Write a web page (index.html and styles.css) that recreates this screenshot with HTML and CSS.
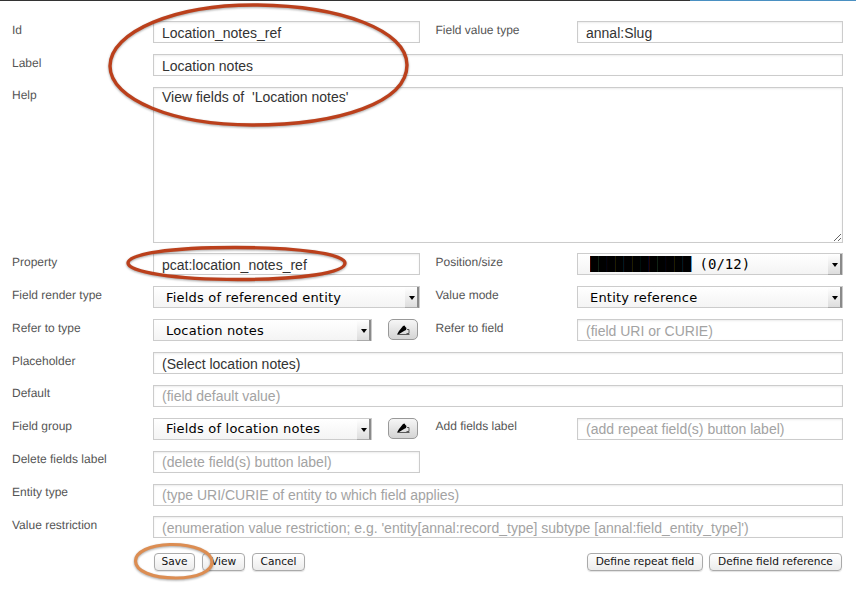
FILE: index.html
```html
<!DOCTYPE html>
<html lang="en">
<head>
<meta charset="utf-8">
<title>Field definition</title>
<link rel="stylesheet" href="styles.css">
</head>
<body>
<div class="topbar"><div class="topbar-dark"></div><div class="topbar-blue"></div></div>
<form class="form">
  <div class="row">
    <label class="label">Id</label>
    <input class="field half first" value="Location_notes_ref">
    <label class="label second">Field value type</label>
    <input class="field half" value="annal:Slug">
  </div>
  <div class="row">
    <label class="label">Label</label>
    <input class="field full" value="Location notes">
  </div>
  <div class="row tall">
    <label class="label">Help</label>
    <textarea class="field full area">View fields of  'Location notes'</textarea>
  </div>
  <div class="row">
    <label class="label">Property</label>
    <input class="field half first" value="pcat:location_notes_ref">
    <label class="label second">Position/size</label>
    <div class="select half"><select class="mono"><option>████████████ (0/12)</option></select></div>
  </div>
  <div class="row">
    <label class="label">Field render type</label>
    <div class="select half first"><select><option>Fields of referenced entity</option></select></div>
    <label class="label second">Value mode</label>
    <div class="select half"><select><option>Entity reference</option></select></div>
  </div>
  <div class="row">
    <label class="label">Refer to type</label>
    <div class="select short"><select><option>Location notes</option></select></div>
    <button type="button" class="pen" aria-label="Edit"><svg class="pen-icon" width="13" height="10" viewBox="0 0 13 10"><path d="M0 9.500L2 6L6 1L7.500 .5L8.500 2L9.500 3L9 5L7 6L4.500 7.500L2.500 8.800Z"/><path d="M.5 9.500H12.500M10 4.500H12V8.500H9.500" fill="none" stroke="#222" stroke-width=".7"/></svg></button>
    <label class="label second">Refer to field</label>
    <input class="field half" placeholder="(field URI or CURIE)">
  </div>
  <div class="row">
    <label class="label">Placeholder</label>
    <input class="field full" value="(Select location notes)">
  </div>
  <div class="row">
    <label class="label">Default</label>
    <input class="field full" placeholder="(field default value)">
  </div>
  <div class="row">
    <label class="label">Field group</label>
    <div class="select short"><select><option>Fields of location notes</option></select></div>
    <button type="button" class="pen" aria-label="Edit"><svg class="pen-icon" width="13" height="10" viewBox="0 0 13 10"><path d="M0 9.500L2 6L6 1L7.500 .5L8.500 2L9.500 3L9 5L7 6L4.500 7.500L2.500 8.800Z"/><path d="M.5 9.500H12.500M10 4.500H12V8.500H9.500" fill="none" stroke="#222" stroke-width=".7"/></svg></button>
    <label class="label second">Add fields label</label>
    <input class="field half" placeholder="(add repeat field(s) button label)">
  </div>
  <div class="row">
    <label class="label">Delete fields label</label>
    <input class="field half first" placeholder="(delete field(s) button label)">
  </div>
  <div class="row">
    <label class="label">Entity type</label>
    <input class="field full" placeholder="(type URI/CURIE of entity to which field applies)">
  </div>
  <div class="row">
    <label class="label">Value restriction</label>
    <input class="field full" placeholder="(enumeration value restriction; e.g. 'entity[annal:record_type] subtype [annal:field_entity_type]')">
  </div>
  <div class="actions">
    <div class="actions-left">
      <button type="button" class="btn save">Save</button>
      <button type="button" class="btn view">View</button>
      <button type="button" class="btn cancel">Cancel</button>
    </div>
    <div class="actions-right">
      <button type="button" class="btn repeat">Define repeat field</button>
      <button type="button" class="btn reference">Define field reference</button>
    </div>
  </div>
</form>
<svg class="marks" width="856" height="589" viewBox="0 0 856 589" aria-hidden="true">
  <path class="mark red" d="M258 5C175 4 110 32 110 66C110 100 175 125 252 125C340 125 407 102 407 65C407 30 340 6 258 5Z"/>
  <path class="mark red" d="M235 247.500C170 247.500 128 254 128 263C128 272 175 279.500 238 279.500C300 279.500 345 273 345 263C345 254 300 247.500 235 247.500Z"/>
  <path class="mark orange" d="M170 544.500C150 545 135.500 552 135.500 561C135.500 571 152 578 176 578C198 578 212 571 212 562C212 552 194 544 170 544.500Z"/>
</svg>
</body>
</html>
```
FILE: styles.css
```css
* { box-sizing: border-box; }
html, body { margin: 0; padding: 0; background: #fff; }
body {
  position: relative;
  width: 856px;
  height: 589px;
  overflow: hidden;
  font-family: "Liberation Sans", Arial, sans-serif;
  text-rendering: geometricPrecision;
}
.topbar { display: flex; height: 1px; }
.topbar-dark { width: 690px; background: #333; }
.topbar-blue { flex: 1; background: #4a90c2; }

.form { padding: 20.200px 13px 0 12px; }
.row { display: flex; align-items: flex-start; height: 22px; margin-bottom: 10.900px; }
.row.tall { height: 155.500px; }
.label { flex: none; width: 141px; padding-top: 1.500px; font-size: 12px; line-height: 15px; color: #555; }
.label.second { width: 141.500px; margin-left: 16.500px; }
.half { width: 266px; flex: none; }
.half.first { width: 267px; }
.half.first + .label.second { margin-left: 15.500px; }
.full { width: 690px; flex: none; }
.short { width: 219px; flex: none; }

.field {
  height: 22px;
  padding: 1px 8px 0 8px;
  border: 1px solid #ccc;
  border-radius: 0;
  outline: none;
  background: #fff;
  box-shadow: inset 0 1px 2px rgba(0, 0, 0, 0.08);
  font-family: "Liberation Sans", Arial, sans-serif;
  font-size: 14px;
  color: #333;
}
.field::placeholder { color: #a3a3a3; opacity: 1; }
.area { height: 156px; padding: 1px 8px; line-height: 17px; resize: both; }

.select { position: relative; height: 22px; border: 1px solid #ccc; background: linear-gradient(#fff, #f4f4f4); }
.select select {
  display: block;
  width: 100%;
  height: 20px;
  padding: 0 14px 0 12px;
  border: 0;
  outline: none;
  appearance: none;
  background: transparent;
  font-family: "DejaVu Sans", sans-serif;
  font-size: 13px;
  letter-spacing: 0.2px;
  color: #000;
}
.select select.mono { font-family: "DejaVu Sans Mono", monospace; font-size: 14px; letter-spacing: 0; }
.select::before {
  content: "";
  position: absolute;
  top: 0;
  right: 0;
  width: 12px;
  height: 20px;
  background: linear-gradient(#fff, #ddd);
  border-right: 2px solid #8a8a8a;
  border-bottom: 1px solid #aaa;
}
.select::after {
  content: "";
  position: absolute;
  top: 9px;
  right: 4px;
  border: 3px solid transparent;
  border-top: 4px solid #000;
  border-bottom: 0;
}

.pen {
  display: flex;
  align-items: center;
  justify-content: center;
  flex: none;
  width: 30px;
  height: 21px;
  margin-left: 16px;
  padding: 0;
  border: 1px solid #999;
  border-radius: 5px;
  background: linear-gradient(#f6f6f6, #d4d4d4);
}
.pen-icon { display: block; }
.pen + .label.second { margin-left: 17.500px; }

.actions { display: flex; justify-content: space-between; padding: 3.500px 1px 0 142px; }
.actions-left { display: flex; gap: 7px; }
.actions-right { display: flex; gap: 6px; }
.btn {
  height: 18px;
  padding: 0;
  border: 1px solid #aaa;
  border-radius: 4px;
  background: linear-gradient(#fff, #ececec);
  box-shadow: 0 1px 1px rgba(0, 0, 0, 0.12);
  font-family: "DejaVu Sans", sans-serif;
  font-size: 10.600px;
  line-height: 15px;
  color: #111;
}
.save { width: 41px; }
.view { width: 43px; }
.cancel { width: 53px; }
.repeat { width: 116px; }
.reference { width: 133px; }

.marks { position: absolute; top: 0; left: 0; pointer-events: none; }
.mark { fill: none; filter: drop-shadow(0 1px 1px rgba(0, 0, 0, 0.35)); }
.red { stroke: #bb401c; stroke-width: 3.400; }
.orange { stroke: #dc8d52; stroke-width: 3.200; }
```
